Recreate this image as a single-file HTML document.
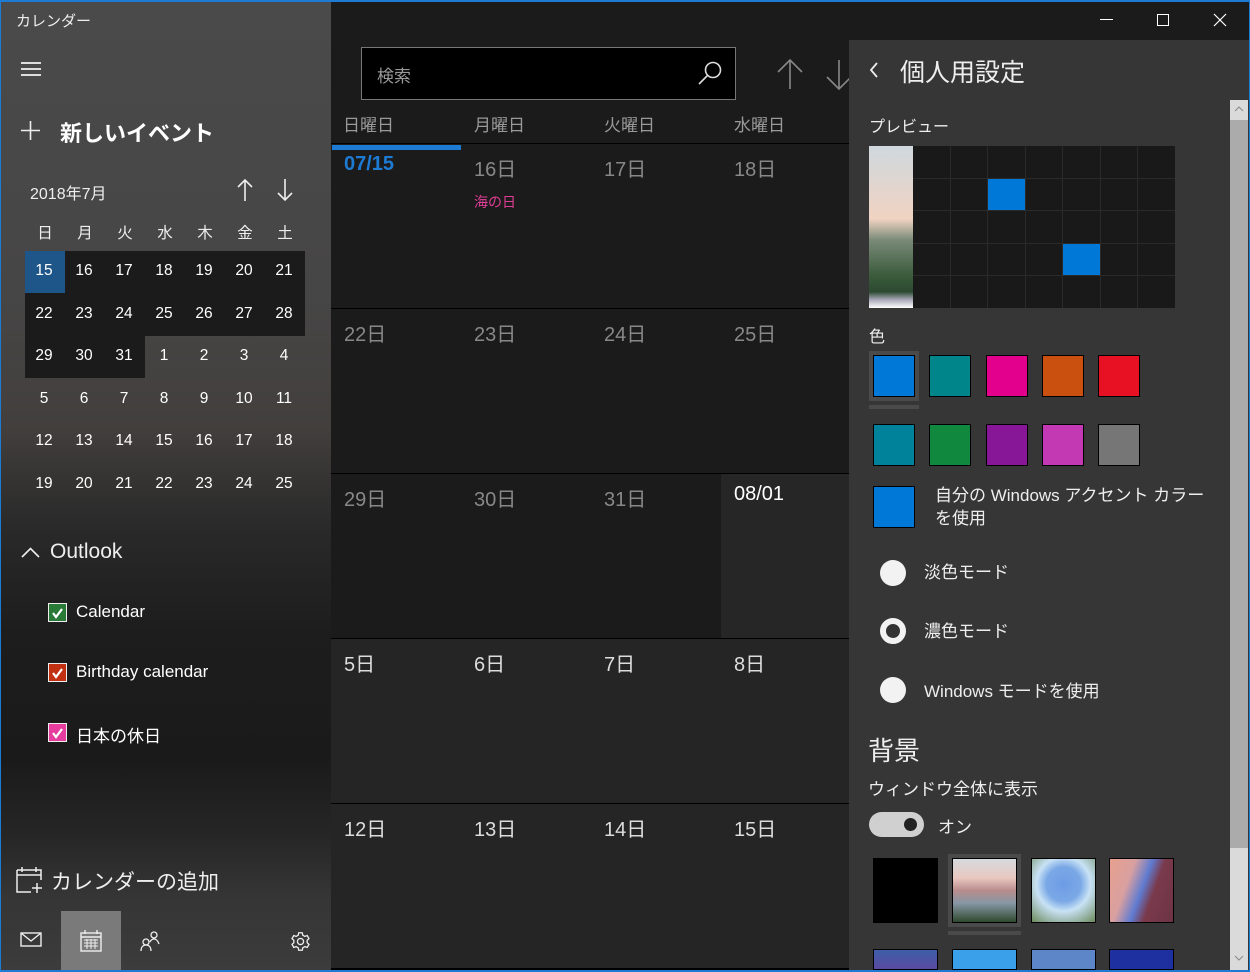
<!DOCTYPE html>
<html style="height:972px;overflow:hidden"><head><meta charset="utf-8"><style>
*{margin:0;padding:0;box-sizing:border-box}
body{width:1250px;height:972px;overflow:hidden;background:#1b1b1b;font-family:"Segoe UI","Liberation Sans","Noto Sans CJK JP",sans-serif;color:#fff;position:relative}
.a{position:absolute}
#side{left:0;top:0;width:331px;height:972px;background:linear-gradient(180deg,#4a4a4a 0%,#474646 30%,#423f3d 44%,#2a2a2a 54%,#1d1d1d 65%,#1a1a1a 78%,#262626 86%,#353535 92%,#3c3c3c 100%)}
.mc{position:absolute;width:40px;text-align:center;font-size:15.5px}
.day{position:absolute;font-size:20px;color:#ddd}
.g{color:#888}
.hd{position:absolute;top:111px;font-size:17px;color:#999}
.cb{position:absolute;left:48px;width:19px;height:19px;border:1px solid #eee}
.sw{position:absolute;width:42px;height:42px;border:1px solid #000}
.rad{position:absolute;left:880px;width:26px;height:26px;border-radius:50%;background:#f2f2f2}
.th{position:absolute;width:65px;height:65px;border:1px solid #000}
</style></head><body>
<div id="side" class="a"></div>
<div class="a" style="left:0;top:0;width:1250px;height:2px;background:#1e7bd3"></div>
<div class="a" style="left:0;top:0;width:1px;height:972px;background:#1e7bd3"></div>
<div class="a" style="left:1249px;top:0;width:1px;height:972px;background:#1e7bd3"></div>
<div class="a" style="left:16px;top:10px;font-size:15px;color:#eee">カレンダー</div>
<div class="a" style="left:21px;top:62px;width:20px;height:2px;background:#ddd;box-shadow:0 6px 0 #ddd,0 12px 0 #ddd"></div>
<svg class="a" style="left:21px;top:121px" width="19" height="19" viewBox="0 0 19 19" stroke="#eee" stroke-width="1.6"><path d="M9.5 0v19M0 9.5h19"/></svg>
<div class="a" style="left:60px;top:116px;font-size:22px;font-weight:bold">新しいイベント</div>
<div class="a" style="left:30px;top:180px;font-size:16px;color:#eee">2018年7月</div>
<svg class="a" style="left:237px;top:179px" width="16" height="22" viewBox="0 0 16 22" fill="none" stroke="#eee" stroke-width="1.6"><path d="M8 1v21M1 8l7-7 7 7"/></svg>
<svg class="a" style="left:277px;top:179px" width="16" height="22" viewBox="0 0 16 22" fill="none" stroke="#eee" stroke-width="1.6"><path d="M8 0v21M1 14l7 7 7-7"/></svg>
<div class="a" style="left:25px;top:251px;width:280px;height:85px;background:#1b1b1b"></div>
<div class="a" style="left:25px;top:336px;width:120px;height:42px;background:#1b1b1b"></div>
<div class="a" style="left:25px;top:251px;width:40px;height:42px;background:#1f5689"></div>
<div id="mini"></div>
<svg class="a" style="left:21px;top:547px" width="19" height="11" viewBox="0 0 19 11" fill="none" stroke="#eee" stroke-width="1.6"><path d="M1 10l8.5-8.5L18 10"/></svg>
<div class="a" style="left:50px;top:540px;font-size:21px;color:#eee">Outlook</div>
<div class="cb" style="top:603px;background:#2a7a37"></div>
<div class="cb" style="top:663px;background:#c23012"></div>
<div class="cb" style="top:723px;background:#e53c9e"></div>
<svg class="a" style="left:48px;top:603px" width="19" height="140" viewBox="0 0 19 140" fill="none" stroke="#fff" stroke-width="2.2"><path d="M5 10l3 4 6-8M5 70l3 4 6-8M5 130l3 4 6-8"/></svg>
<div class="a" style="left:76px;top:602px;font-size:17px">Calendar</div>
<div class="a" style="left:76px;top:662px;font-size:17px">Birthday calendar</div>
<div class="a" style="left:76px;top:722px;font-size:17px">日本の休日</div>
<svg class="a" style="left:16px;top:866px" width="28" height="28" viewBox="0 0 28 28" fill="none" stroke="#eee" stroke-width="1.5"><path d="M1 4h24v10M1 4v22h14M1 9h24M6 1v5M20 1v5M21 17v10M16 22h10"/></svg>
<div class="a" style="left:51px;top:866px;font-size:21px;color:#eee">カレンダーの追加</div>
<div class="a" style="left:61px;top:911px;width:60px;height:59px;background:#7a7a7a"></div>
<svg class="a" style="left:20px;top:932px" width="22" height="16" viewBox="0 0 22 16" fill="none" stroke="#eee" stroke-width="1.4"><rect x="1" y="1" width="20" height="13"/><path d="M1 1l10 8 10-8"/></svg>
<svg class="a" style="left:80px;top:930px" width="22" height="22" viewBox="0 0 22 22" fill="none" stroke="#eee" stroke-width="1.4"><rect x="1" y="3" width="20" height="18"/><path d="M1 7h20M5 0v4M17 0v4"/><path d="M4 10h14M4 13h14M4 16h14M7 9v10M11 9v10M15 9v10" stroke-width="1"/></svg>
<svg class="a" style="left:140px;top:930px" width="22" height="22" viewBox="0 0 22 22" fill="none" stroke="#eee" stroke-width="1.3"><circle cx="6" cy="12" r="3"/><path d="M1 21c0-4 2-6 5-6s5 2 5 6"/><circle cx="14" cy="5" r="3"/><path d="M10 12c1-2 2-3 4-3s4 2 5 5"/></svg>
<svg class="a" style="left:290px;top:931px" width="21" height="21" viewBox="0 0 24 24" fill="none" stroke="#eee" stroke-width="1.5"><circle cx="12" cy="12" r="3.5"/><path d="M10 2h4l.6 2.8 2.4 1.4 2.7-1 2 3.5-2.1 1.9v2.8l2.1 1.9-2 3.5-2.7-1-2.4 1.4L14 22h-4l-.6-2.8-2.4-1.4-2.7 1-2-3.5 2.1-1.9v-2.8L2.3 8.7l2-3.5 2.7 1 2.4-1.4z"/></svg>

<!-- main -->
<div class="a" style="left:331px;top:2px;width:918px;height:38px;background:#1b1b1b"></div>
<div class="a" style="left:361px;top:47px;width:375px;height:53px;background:#000;border:1px solid #777"></div>
<div class="a" style="left:377px;top:62px;font-size:17px;color:#999">検索</div>
<svg class="a" style="left:698px;top:60px" width="25" height="26" viewBox="0 0 25 26" fill="none" stroke="#ddd" stroke-width="1.6"><circle cx="15" cy="10" r="7.5"/><path d="M9.5 15.5L1 24"/></svg>
<svg class="a" style="left:776px;top:58px" width="28" height="32" viewBox="0 0 28 32" fill="none" stroke="#888" stroke-width="1.6"><path d="M14 2v29M2 14L14 2l12 12"/></svg>
<svg class="a" style="left:826px;top:58px" width="24" height="32" viewBox="0 0 24 32" fill="none" stroke="#888" stroke-width="1.6"><path d="M13 2v29M1 19l12 12 12-12"/></svg>
<div class="hd" style="left:343px">日曜日</div><div class="hd" style="left:474px">月曜日</div><div class="hd" style="left:604px">火曜日</div><div class="hd" style="left:734px">水曜日</div>
<div class="a" style="left:331px;top:143px;width:518px;height:1px;background:#000"></div>
<div class="a" style="left:332px;top:145px;width:129px;height:5px;background:#1e7bd3"></div>
<div class="a" style="left:331px;top:638px;width:518px;height:332px;background:#252525"></div>
<div class="a" style="left:721px;top:474px;width:128px;height:164px;background:#262626"></div>
<div class="a" style="left:331px;top:308px;width:518px;height:1px;background:#000"></div>
<div class="a" style="left:331px;top:473px;width:518px;height:1px;background:#000"></div>
<div class="a" style="left:331px;top:638px;width:518px;height:1px;background:#000"></div>
<div class="a" style="left:331px;top:803px;width:518px;height:1px;background:#000"></div>
<div class="a" style="left:331px;top:968px;width:518px;height:2px;background:#000"></div>
<div class="day" style="left:344px;top:153px;color:#1e7bd3;font-weight:bold">07/15</div>
<div class="day g" style="left:474px;top:153px">16日</div><div class="day g" style="left:604px;top:153px">17日</div><div class="day g" style="left:734px;top:153px">18日</div>
<div class="a" style="left:474px;top:192px;font-size:14px;color:#e23d96">海の日</div>
<div class="day g" style="left:344px;top:318px">22日</div><div class="day g" style="left:474px;top:318px">23日</div><div class="day g" style="left:604px;top:318px">24日</div><div class="day g" style="left:734px;top:318px">25日</div>
<div class="day g" style="left:344px;top:483px">29日</div><div class="day g" style="left:474px;top:483px">30日</div><div class="day g" style="left:604px;top:483px">31日</div><div class="day" style="left:734px;top:483px;color:#fff">08/01</div>
<div class="day" style="left:344px;top:648px">5日</div><div class="day" style="left:474px;top:648px">6日</div><div class="day" style="left:604px;top:648px">7日</div><div class="day" style="left:734px;top:648px">8日</div>
<div class="day" style="left:344px;top:813px">12日</div><div class="day" style="left:474px;top:813px">13日</div><div class="day" style="left:604px;top:813px">14日</div><div class="day" style="left:734px;top:813px">15日</div>

<!-- title controls -->
<div class="a" style="left:1100px;top:19px;width:13px;height:1px;background:#fff"></div>
<div class="a" style="left:1157px;top:14px;width:12px;height:12px;border:1px solid #fff"></div>
<svg class="a" style="left:1213px;top:13px" width="14" height="14" viewBox="0 0 14 14" stroke="#fff" stroke-width="1.2"><path d="M1 1l12 12M13 1L1 13"/></svg>

<!-- settings -->
<div class="a" style="left:849px;top:40px;width:400px;height:930px;background:#363636;overflow:hidden">
<svg class="a" style="left:20px;top:22px" width="10" height="16" viewBox="0 0 10 16" fill="none" stroke="#eee" stroke-width="1.8"><path d="M8 1L2 8l6 7"/></svg>
<div class="a" style="left:51px;top:13px;font-size:25px;color:#eee">個人用設定</div>
<div class="a" style="left:381px;top:60px;width:18px;height:870px;background:#dadada"></div>
<div class="a" style="left:381px;top:80px;width:18px;height:728px;background:#ababab"></div>
<svg class="a" style="left:385px;top:66px" width="10" height="6" viewBox="0 0 10 6" fill="none" stroke="#888"><path d="M1 5l4-4 4 4"/></svg>
<svg class="a" style="left:385px;top:915px" width="10" height="6" viewBox="0 0 10 6" fill="none" stroke="#888"><path d="M1 1l4 4 4-4"/></svg>
<div class="a" style="left:20px;top:73px;font-size:16px;color:#eee">プレビュー</div>
<div class="a" style="left:20px;top:106px;width:44px;height:162px;background:linear-gradient(180deg,#cfd8de 0%,#f0d3c2 45%,#7a8a78 58%,#3b5b3c 80%,#2c4a30 90%,#aab 95%,#fff 100%)"></div>
<div class="a" style="left:64px;top:106px;width:262px;height:162px;background:#2a2a2a;display:grid;grid-template-columns:repeat(7,1fr);grid-template-rows:repeat(5,1fr);gap:1px" id="pg"></div>
<div class="a" style="left:20px;top:283px;font-size:16px;color:#eee">色</div>
<div class="a" style="left:20px;top:311px;width:50px;height:50px;background:#4a4a4a"></div>
<div class="a" style="left:20px;top:365px;width:50px;height:4px;background:#4a4a4a"></div>
<div class="sw" style="left:24px;top:315px;background:#0078d7"></div>
<div class="sw" style="left:80px;top:315px;background:#00858a"></div>
<div class="sw" style="left:137px;top:315px;background:#e3008c"></div>
<div class="sw" style="left:193px;top:315px;background:#ca5010"></div>
<div class="sw" style="left:249px;top:315px;background:#e81123"></div>
<div class="sw" style="left:24px;top:384px;background:#00829b"></div>
<div class="sw" style="left:80px;top:384px;background:#10893e"></div>
<div class="sw" style="left:137px;top:384px;background:#881798"></div>
<div class="sw" style="left:193px;top:384px;background:#c239b3"></div>
<div class="sw" style="left:249px;top:384px;background:#767676"></div>
<div class="sw" style="left:24px;top:446px;background:#0078d7"></div>
<div class="a" style="left:86px;top:444px;width:284px;font-size:17px;color:#eee;line-height:23px;word-break:break-all">自分の Windows アクセント カラーを使用</div>
</div>
<div class="rad" style="top:560px"></div><div class="a" style="left:924px;top:558px;font-size:17px;color:#eee">淡色モード</div>
<div class="rad" style="top:618px;border:6px solid #f2f2f2;background:#333"></div><div class="a" style="left:924px;top:617px;font-size:17px;color:#eee">濃色モード</div>
<div class="rad" style="top:677px"></div><div class="a" style="left:924px;top:677px;font-size:17px;color:#eee">Windows モードを使用</div>
<div class="a" style="left:868px;top:731px;font-size:26px;color:#eee">背景</div>
<div class="a" style="left:868px;top:775px;font-size:17px;color:#eee">ウィンドウ全体に表示</div>
<div class="a" style="left:869px;top:812px;width:55px;height:25px;border-radius:13px;background:#d0d0d0"></div>
<div class="a" style="left:904px;top:818px;width:13px;height:13px;border-radius:50%;background:#222"></div>
<div class="a" style="left:938px;top:813px;font-size:17px;color:#eee">オン</div>
<div class="a" style="left:948px;top:854px;width:73px;height:73px;background:#4a4a4a"></div>
<div class="a" style="left:948px;top:931px;width:73px;height:4px;background:#4a4a4a"></div>
<div class="th" style="left:873px;top:858px;background:#000"></div>
<div class="th" style="left:952px;top:858px;background:linear-gradient(180deg,#d5dade 0%,#e9c8c0 30%,#b98c8c 50%,#8797a6 70%,#2f4a2e 100%)"></div>
<div class="th" style="left:1031px;top:858px;background:radial-gradient(circle at 50% 40%,#6d9ce6 0%,#7aa8e6 35%,#c8e2f5 55%,#6c8a5c 100%)"></div>
<div class="th" style="left:1109px;top:858px;background:linear-gradient(110deg,#e7a08d 0%,#d9a0a0 30%,#5f7bd1 50%,#7a3a4c 65%,#6c3344 100%)"></div>
<div class="th" style="left:873px;top:949px;height:21px;background:linear-gradient(180deg,#3e5ea8,#5a4aa0)"></div>
<div class="th" style="left:952px;top:949px;height:21px;background:#3aa0ea"></div>
<div class="th" style="left:1031px;top:949px;height:21px;background:#5d86c8"></div>
<div class="th" style="left:1109px;top:949px;height:21px;background:#1e2f9f"></div>
<div class="a" style="left:0;top:970px;width:1250px;height:2px;background:#1e7bd3"></div>
<script>
var m=document.getElementById('mini'),h='';
var wd=['日','月','火','水','木','金','土'];
for(var i=0;i<7;i++)h+='<div class="mc" style="left:'+(25+i*40)+'px;top:221px;color:#eee">'+wd[i]+'</div>';
var d=[15,16,17,18,19,20,21,22,23,24,25,26,27,28,29,30,31,1,2,3,4,5,6,7,8,9,10,11,12,13,14,15,16,17,18,19,20,21,22,23,24,25];
var ys=[262,305,347,390,432,475];
for(var k=0;k<42;k++){h+='<div class="mc" style="left:'+(24+(k%7)*40)+'px;top:'+ys[Math.floor(k/7)]+'px">'+d[k]+'</div>'}
m.innerHTML=h;
var p=document.getElementById('pg'),s='';
for(var j=0;j<35;j++)s+='<div style="background:'+((j==9||j==25)?'#0078d7':'#191919')+'"></div>';
p.innerHTML=s;
</script>
</body></html>
